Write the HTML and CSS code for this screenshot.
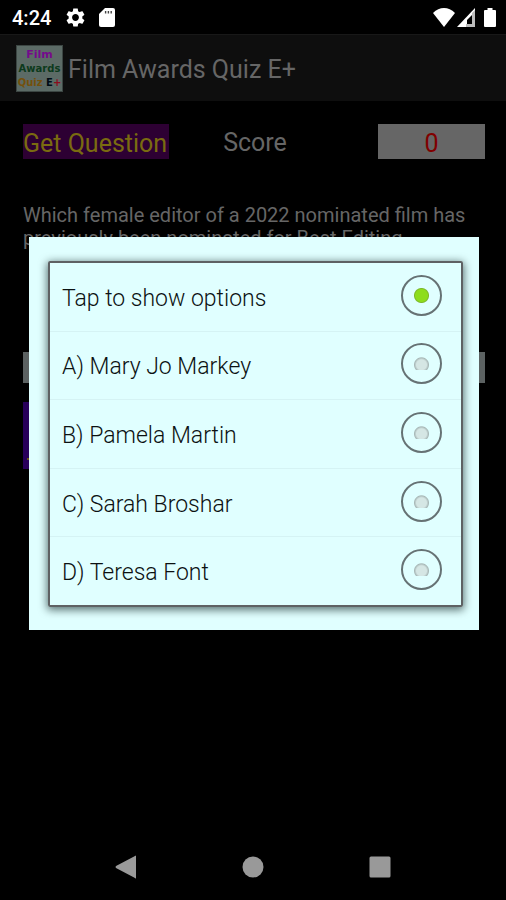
FILE: index.html
```html
<!DOCTYPE html>
<html lang="en">
<head>
<meta charset="utf-8">
<meta name="viewport" content="width=device-width, initial-scale=1">
<title>Film Awards Quiz E+</title>
<link rel="stylesheet" href="styles.css">
</head>
<body>
<div class="screen">
  <header class="status">
    <span class="clock">4:24</span>
    <svg class="gear" viewBox="2 2 20 20" aria-hidden="true"><path fill="#fff" d="M19.14 12.94c.04-.3.06-.61.06-.94s-.02-.64-.07-.94l2.03-1.58c.18-.14.23-.41.12-.61l-1.92-3.32c-.12-.22-.37-.29-.59-.22l-2.39.96c-.5-.38-1.03-.7-1.62-.94L14.4 2.81c-.04-.24-.24-.41-.48-.41h-3.84c-.24 0-.43.17-.47.41L9.25 5.35c-.59.24-1.13.57-1.62.94l-2.39-.96c-.22-.08-.47 0-.59.22L2.74 8.87c-.12.21-.08.47.12.61l2.03 1.58c-.05.3-.09.63-.09.94s.02.64.07.94l-2.03 1.58c-.18.14-.23.41-.12.61l1.92 3.32c.12.22.37.29.59.22l2.39-.96c.5.38 1.03.7 1.62.94l.36 2.54c.05.24.24.41.48.41h3.84c.24 0 .44-.17.47-.41l.36-2.54c.59-.24 1.13-.56 1.62-.94l2.39.96c.22.08.47 0 .59-.22l1.92-3.32c.12-.22.07-.47-.12-.61l-2.01-1.58zM12 15.6c-1.98 0-3.6-1.62-3.6-3.6s1.62-3.6 3.6-3.6 3.6 1.62 3.6 3.6-1.62 3.6-3.6 3.6z"/></svg>
    <svg class="card" viewBox="0 0 16 19" aria-hidden="true"><path fill="#fff" d="M6 0h8q2 0 2 2v15q0 2-2 2H2q-2 0-2-2V6z"/><path stroke="#444" stroke-width="1.400" d="M6.600 3v2.500M9.400 3v2.500M12.200 3v2.500"/></svg>
    <span class="signals">
      <svg class="wifi" viewBox="0 0 22 19" aria-hidden="true"><path fill="#fff" d="M0 5Q5 0 11 0t11 5L11 19z"/></svg>
      <svg class="cell" viewBox="0 0 18 19" aria-hidden="true"><path fill="#fff" d="M18 0v19H0z"/><path fill="#bbb" d="M15 5l3-3v17H9v-3h6z"/><path fill="#000" d="M15 7v9H10v-4z"/></svg>
      <svg class="battery" viewBox="0 0 12 19" aria-hidden="true"><path fill="#fff" d="M3.500 0h5v2H11q1 0 1 1v15q0 1-1 1H1q-1 0-1-1V3q0-1 1-1h2.500z"/></svg>
    </span>
  </header>
  <div class="appbar">
    <div class="logo"><span class="logo-film">Film</span><span class="logo-awards">Awards</span><span class="logo-quiz">Quiz <b>E</b><i>+</i></span></div>
    <h1>Film Awards Quiz E+</h1>
  </div>
  <main>
    <div class="scorebar">
      <button class="get" type="button">Get Question</button>
      <span class="score-label">Score</span>
      <output class="score">0</output>
    </div>
    <p class="question">Which female editor of a 2022 nominated film has previously been nominated for Best Editing</p>
    <div class="picker"></div>
    <div class="answer"></div>
  </main>
  <nav class="nav">
    <button type="button" aria-label="Back"><svg viewBox="0 0 24 24"><path fill="#999" d="M22 1v22q0 1-1 0L2 13q-1-1 0-2L21 1q1-1 1 0z"/></svg></button>
    <button type="button" aria-label="Home"><svg viewBox="0 0 24 24"><circle cx="12" cy="12" r="10.500" fill="#999"/></svg></button>
    <button type="button" aria-label="Recent apps"><svg viewBox="0 0 24 24"><rect x="1.500" y="1.500" width="21" height="21" rx="1.500" fill="#999"/></svg></button>
  </nav>
  <div class="overlay">
    <form class="dialog" role="dialog" aria-label="Options">
      <div class="options">
        <label><span>Tap to show options</span><input type="radio" name="option" checked></label>
        <label><span>A) Mary Jo Markey</span><input type="radio" name="option"></label>
        <label><span>B) Pamela Martin</span><input type="radio" name="option"></label>
        <label><span>C) Sarah Broshar</span><input type="radio" name="option"></label>
        <label><span>D) Teresa Font</span><input type="radio" name="option"></label>
      </div>
    </form>
  </div>
</div>
</body>
</html>
```
FILE: styles.css
```css
* { box-sizing: border-box; }

body {
  margin: 0;
  background: #000;
  font-family: Roboto, "Liberation Sans", sans-serif;
}

button {
  border: 0;
  padding: 0;
  background: none;
  font: inherit;
}

.screen {
  position: relative;
  display: flex;
  flex-direction: column;
  min-height: 100vh;
}

.status {
  display: flex;
  align-items: center;
  height: 34px;
  padding: 0 10px 0 12px;
  color: #fff;
}

.clock {
  width: 54px;
  padding-top: 2px;
  font-size: 20px;
  font-weight: 500;
}

.gear { width: 19px; height: 19px; }
.card { width: 16px; height: 19px; margin-left: 14px; }

.signals {
  display: flex;
  margin-left: auto;
}

.wifi { width: 22px; height: 19px; }
.cell { width: 18px; height: 19px; margin-left: 2px; }
.battery { width: 12px; height: 19px; margin-left: 9px; }

.appbar {
  display: flex;
  align-items: center;
  gap: 5px;
  height: 67px;
  padding-left: 16px;
  background: #0e0e0e;
  border-top: 1px solid #181818;
}

.logo {
  display: flex;
  flex-direction: column;
  align-items: center;
  width: 47px;
  height: 47px;
  padding-top: 2px;
  background: #5c6b66;
  border: 1px solid #3c4643;
  font: bold 11px/14px "DejaVu Sans", sans-serif;
  white-space: nowrap;
}

.logo-film { color: #750a8c; }
.logo-awards { color: #0c3a1c; font-size: 10px; }
.logo-quiz { color: #74500c; font-size: 10px; }
.logo-quiz b { color: #000c14; }
.logo-quiz i { color: #8c0c1c; font-style: normal; }

h1 {
  margin: 0;
  padding-top: 2px;
  color: #666;
  font-size: 25px;
  font-weight: 400;
}

main {
  flex: 1;
  padding: 23px 21px 0 23px;
}

.scorebar {
  display: flex;
  align-items: center;
  height: 35px;
  font-size: 25px;
  line-height: 35px;
}

.get {
  height: 35px;
  padding: 2px 2px 0 0;
  background: #2d0033;
  color: #7a6b10;
}

.score-label {
  margin-left: 54px;
  padding-top: 2px;
  color: #666;
}

.score {
  width: 107px;
  height: 35px;
  margin-left: auto;
  padding-top: 2px;
  background: #666;
  color: #800000;
  text-align: center;
}

.question {
  height: 148px;
  margin: 45px 0 0;
  color: #666;
  font-size: 20px;
  line-height: 23px;
}

.picker {
  height: 31px;
  background: #5c6262;
}

.answer {
  display: flex;
  align-items: flex-end;
  width: 60%;
  height: 67px;
  margin-top: 19px;
  padding: 0 0 9px 4px;
  background: #28005a;
}

.answer::before {
  content: "";
  width: 3px;
  height: 2px;
  background: #665014;
}

.nav {
  display: flex;
  justify-content: space-around;
  align-items: center;
  height: 66px;
  padding: 0 63px;
}

.nav button, .nav svg {
  display: block;
  width: 24px;
  height: 24px;
}

.overlay {
  position: absolute;
  inset: 0;
  display: flex;
  align-items: center;
  padding: 0 27px 33px 29px;
}

.dialog {
  flex: 1;
  display: flex;
  height: 393px;
  padding: 24px 16px 23px 19px;
  background: #e0ffff;
}

.options {
  flex: 1;
  display: flex;
  flex-direction: column;
  border: 2px solid #5e6163;
  border-radius: 2px;
  box-shadow: 0 2px 8px 1px rgba(0, 20, 20, .6);
}

.options label {
  flex: 1;
  display: flex;
  align-items: center;
  justify-content: space-between;
  padding: 0 19px 0 12px;
  color: #0c1112;
  font-size: 23px;
  font-weight: 300;
}

.options label + label { border-top: 1px solid #d5f3f4; }

.options span { padding-top: 3px; }

.options input {
  appearance: none;
  width: 41px;
  height: 41px;
  margin: 0 0 3px;
  border: 2px solid #667274;
  border-radius: 50%;
  background: radial-gradient(circle at 50% 60%, #d5e6e4 5px, #a9b9b8 7px, transparent 8px) center / 15px 13px no-repeat;
}

.options input:checked {
  background: radial-gradient(circle, #8ddd1c 6px, #7db82a 7px, transparent 8px);
}
```
